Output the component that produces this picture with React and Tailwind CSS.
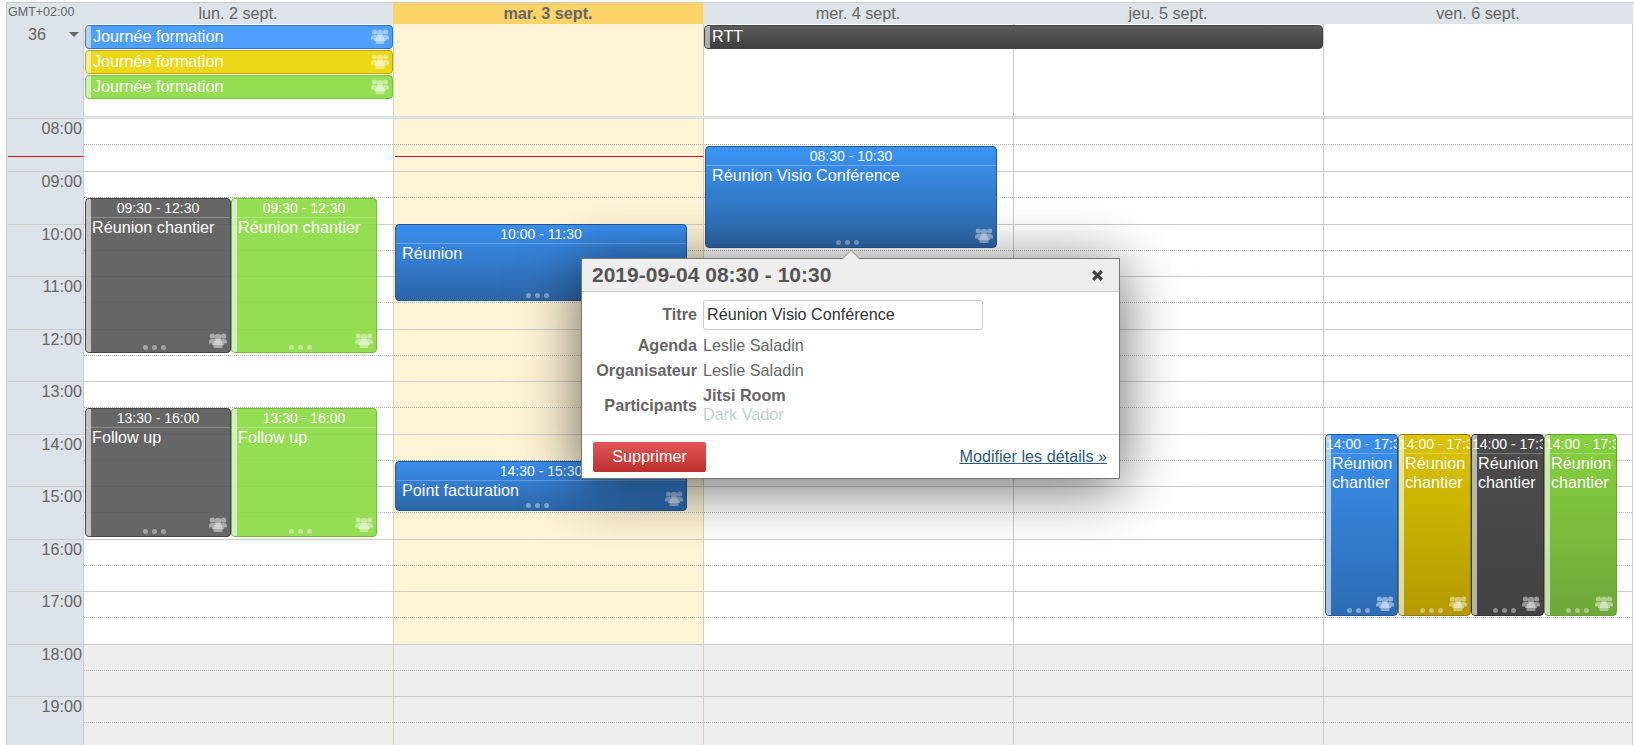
const days = [
  { label: "lun. 2 sept." },
  { label: "mar. 3 sept.", today: true },
  { label: "mer. 4 sept." },
  { label: "jeu. 5 sept." },
  { label: "ven. 6 sept." },
];

const hours = ["08:00", "09:00", "10:00", "11:00", "12:00", "13:00", "14:00", "15:00", "16:00", "17:00", "18:00", "19:00"];

const GREY = "bg-[#555555]/90 border-[#444444]";
const GREEN = "bg-[#8ad93f]/90 border-[#79b94a]";

const timedEvents = [
  [
    { time: "09:30 - 12:30", title: "Réunion chantier", pos: "left-[1px] top-[80px] w-[146px] h-[155px]", color: GREY, strip: true },
    { time: "09:30 - 12:30", title: "Réunion chantier", pos: "left-[147px] top-[80px] w-[146px] h-[155px]", color: GREEN, strip: true },
    { time: "13:30 - 16:00", title: "Follow up", pos: "left-[1px] top-[290px] w-[146px] h-[129px]", color: GREY, strip: true },
    { time: "13:30 - 16:00", title: "Follow up", pos: "left-[147px] top-[290px] w-[146px] h-[129px]", color: GREEN, strip: true },
  ],
  [
    { time: "10:00 - 11:30", title: "Réunion", pos: "left-[1px] top-[106px] w-[292px] h-[77px]", color: "bg-gradient-to-b from-[#3a8ff0] to-[#2c66a8] border-[#23588f]" },
    { time: "14:30 - 15:30", title: "Point facturation", pos: "left-[1px] top-[343px] w-[292px] h-[50px]", color: "bg-gradient-to-b from-[#3a8ff0] to-[#2c66a8] border-[#23588f]" },
  ],
  [
    { time: "08:30 - 10:30", title: "Réunion Visio Conférence", pos: "left-[1px] top-[28px] w-[292px] h-[102px]", color: "bg-gradient-to-b from-[#3a94f4] to-[#2d66a8] border-[#23588f]" },
  ],
  [],
  [
    { time: "14:00 - 17:30", title: "Réunion chantier", pos: "left-[1px] top-[316px] w-[73px] h-[182px]", color: "bg-gradient-to-b from-[#3a90ee] to-[#2c6cb4] border-[#23588f]", strip: true, narrow: true },
    { time: "14:00 - 17:30", title: "Réunion chantier", pos: "left-[74px] top-[316px] w-[73px] h-[182px]", color: "bg-gradient-to-b from-[#dcc400] to-[#b39a00] border-[#8f7d10]", strip: true, narrow: true },
    { time: "14:00 - 17:30", title: "Réunion chantier", pos: "left-[147px] top-[316px] w-[73px] h-[182px]", color: "bg-gradient-to-b from-[#4c4c4c] to-[#424242] border-[#333333]", strip: true, narrow: true },
    { time: "14:00 - 17:30", title: "Réunion chantier", pos: "left-[220px] top-[316px] w-[73px] h-[182px]", color: "bg-gradient-to-b from-[#86d23e] to-[#6fa83a] border-[#6b9f3c]", strip: true, narrow: true },
  ],
];

function PeopleIcon() {
  return (
    <svg viewBox="0 0 18 16" className="absolute right-[3px] bottom-[4px] h-4 w-[18px] fill-white/45">
      <circle cx="3.4" cy="4" r="2.6" />
      <circle cx="14.6" cy="4" r="2.6" />
      <path d="M0 10c0-2 1.2-3 3.4-3h11.2c2.2 0 3.4 1 3.4 3v1.5h-3V13H3v-1.5H0z" />
      <circle cx="9" cy="5" r="3.2" />
      <path d="M4.5 12c0-2.6 1.5-4.2 4.5-4.2s4.5 1.6 4.5 4.2V15q0 1-1 1h-7q-1 0-1-1z" />
    </svg>
  );
}

function Dots() {
  return (
    <div className="absolute bottom-[2px] left-1/2 -ml-[15px] flex gap-1">
      <span className="h-[5px] w-[5px] rounded-full bg-white/40" />
      <span className="h-[5px] w-[5px] rounded-full bg-white/40" />
      <span className="h-[5px] w-[5px] rounded-full bg-white/40" />
    </div>
  );
}

function TimedEvent({ event }) {
  return (
    <div className={`absolute z-10 overflow-hidden rounded-[4px] border text-white ${event.pos} ${event.color}`}>
      {event.strip && <div className="absolute inset-y-0 left-0 z-10 w-[5px] bg-white/60" />}
      <div className={`h-[19px] whitespace-nowrap border-b border-white/25 text-[14px] leading-[18px] ${event.narrow ? "text-left" : "text-center"}`}>
        {event.time}
      </div>
      <div className="pr-1 pl-[6px] leading-[19px]">{event.title}</div>
      <Dots />
      <PeopleIcon />
    </div>
  );
}

function AllDayEvent({ title, pos, color, icon = true }) {
  return (
    <div className={`absolute z-10 flex items-center overflow-hidden rounded-[4px] border pb-px pl-[7px] text-white ${pos} ${color}`}>
      <div className="absolute inset-y-0 left-0 w-[5px] bg-white/55" />
      <span className="relative">{title}</span>
      {icon && <PeopleIcon />}
    </div>
  );
}

function HourRow({ index, today }) {
  const off = index >= 10;
  return (
    <div
      className={`border-t ${index === 0 ? "h-[53px] border-[#dfe1e3]" : "h-[52.5px] border-[#cccccc]"} ${
        off ? "bg-[#eeeeee]" : today ? "bg-[#fff4d6]" : "bg-white"
      }`}
    >
      <div className="h-[26px] border-b border-dotted border-[#bbbbbb]" />
    </div>
  );
}

export default function App() {
  return (
    <div className="relative h-[745px] w-full overflow-hidden bg-white pt-[2px] pl-[6px] font-['Liberation_Sans',Arial,sans-serif] text-[16.2px] text-[#666666]">
      {/* TOP: header + all day */}
      <div className="flex border-t border-[#cccccc]">
        <div className="h-[115px] w-[77px] shrink-0 border-l border-[#cccccc] bg-[#dce3e9]">
          <div className="h-[21px] pl-px text-[12.5px] leading-[19px]">GMT+02:00</div>
          <div className="flex h-5 items-center leading-5">
            <span className="ml-[21px]">36</span>
            <span className="ml-[23px] h-0 w-0 border-x-[5px] border-t-[5px] border-x-transparent border-t-[#666666]" />
          </div>
        </div>
        <div className="w-[1550px] shrink-0">
          <div className="flex h-[21px] bg-[#dce3e9]">
            {days.map((day) => (
              <div
                key={day.label}
                className={`w-[310px] text-center leading-[21px] ${day.today ? "bg-[#fdd266] font-bold" : ""}`}
              >
                {day.label}
              </div>
            ))}
          </div>
          <div className="relative flex h-[92px]">
            {days.map((day, i) => (
              <div
                key={day.label}
                className={`w-[310px] border-l ${day.today ? "border-[#d8d2bc] bg-[#fff4d6]" : "border-[#cccccc] bg-white"} ${i === 2 ? "border-[#d8d2bc]" : ""} ${i === 4 ? "border-r" : ""}`}
              />
            ))}
            <AllDayEvent title="Journée formation" pos="left-[2px] top-[1px] h-6 w-[308px]" color="bg-[#4f9fff] border-[#2f75c8]" />
            <AllDayEvent title="Journée formation" pos="left-[2px] top-[26px] h-6 w-[308px]" color="bg-[#ecd816] border-[#b8a510]" />
            <AllDayEvent title="Journée formation" pos="left-[2px] top-[51px] h-6 w-[308px]" color="bg-[#94de52] border-[#7cc040]" />
            <AllDayEvent title="RTT" pos="left-[621px] top-[1px] h-6 w-[619px]" color="bg-gradient-to-b from-[#5c5c5c] to-[#404040] border-[#444444]" icon={false} />
          </div>
          <div className="h-[2px] bg-[#dfe1e3]" />
        </div>
      </div>

      {/* TIME GRID */}
      <div className="flex">
        <div className="relative w-[77px] shrink-0 border-l border-[#cccccc] bg-[#dce3e9]">
          {hours.map((hour, i) => (
            <div
              key={hour}
              className={`ml-px border-t border-[#cccccc] pr-px text-right leading-[19px] ${i === 0 ? "h-[53px]" : "h-[52.5px]"}`}
            >
              {hour}
            </div>
          ))}
          <div className="absolute top-[38px] left-px right-0 h-px bg-[#ff0000]" />
        </div>
        {days.map((day, i) => (
          <div
            key={day.label}
            className={`relative w-[310px] shrink-0 border-l ${day.today || i === 2 ? "border-[#d8d2bc]" : "border-[#cccccc]"} ${i === 4 ? "border-r" : ""}`}
          >
            {hours.map((hour, h) => (
              <HourRow key={hour} index={h} today={day.today} />
            ))}
            {day.today && <div className="absolute top-[38px] left-px right-0 h-px bg-[#ff0000]" />}
            {timedEvents[i].map((event) => (
              <TimedEvent key={event.pos} event={event} />
            ))}
          </div>
        ))}
      </div>

      {/* POPUP */}
      <div className="absolute top-[258px] left-[581px] z-20 flex h-[221px] w-[539px] flex-col border border-[#777777] bg-white shadow-[0_8px_55px_rgba(0,0,0,0.6)]">
        <div className="absolute -top-[7px] left-[263px] h-3 w-3 rotate-45 border-t border-l border-[#999999] bg-[#eeeeee]" />
        <div className="relative flex h-[33px] items-center justify-between border-b border-[#cccccc] bg-[#eeeeee] pr-[15px] pl-[10px]">
          <span className="text-[21px] font-bold text-[#555555]">2019-09-04 08:30 - 10:30</span>
          <svg viewBox="0 0 12 12" className="h-[13px] w-[13px] stroke-[#444444]" strokeWidth="3">
            <path d="M2 2l8 8M10 2l-8 8" />
          </svg>
        </div>
        <div className="mt-2 flex-1">
          <div className="flex h-[30px] items-center">
            <span className="mb-px w-[115px] text-right font-bold">Titre</span>
            <div className="ml-[6px] flex h-[30px] w-[280px] items-center rounded-[3px] border border-[#cccccc] pb-px pl-[3px] text-[#333333]">
              Réunion Visio Conférence
            </div>
          </div>
          <div className="mt-1 flex h-6 items-center pb-px">
            <span className="w-[115px] text-right font-bold">Agenda</span>
            <span className="ml-[6px]">Leslie Saladin</span>
          </div>
          <div className="flex h-6 items-center">
            <span className="w-[115px] text-right font-bold">Organisateur</span>
            <span className="ml-[6px]">Leslie Saladin</span>
          </div>
          <div className="mt-1 flex items-center">
            <span className="w-[115px] text-right font-bold">Participants</span>
            <div className="ml-[6px] leading-[19px]">
              <div className="font-bold">Jitsi Room</div>
              <div className="text-[#c8cfcf]">Dark Vador</div>
            </div>
          </div>
        </div>
        <div className="flex h-[44px] items-center justify-between border-t border-[#cccccc] pr-3 pl-[11px]">
          <button className="h-[30px] w-[113px] rounded-[2px] bg-gradient-to-b from-[#e35656] to-[#bd2f2f] text-white">
            Supprimer
          </button>
          <a className="text-[#2c5a7a] underline">Modifier les détails »</a>
        </div>
      </div>
    </div>
  );
}
